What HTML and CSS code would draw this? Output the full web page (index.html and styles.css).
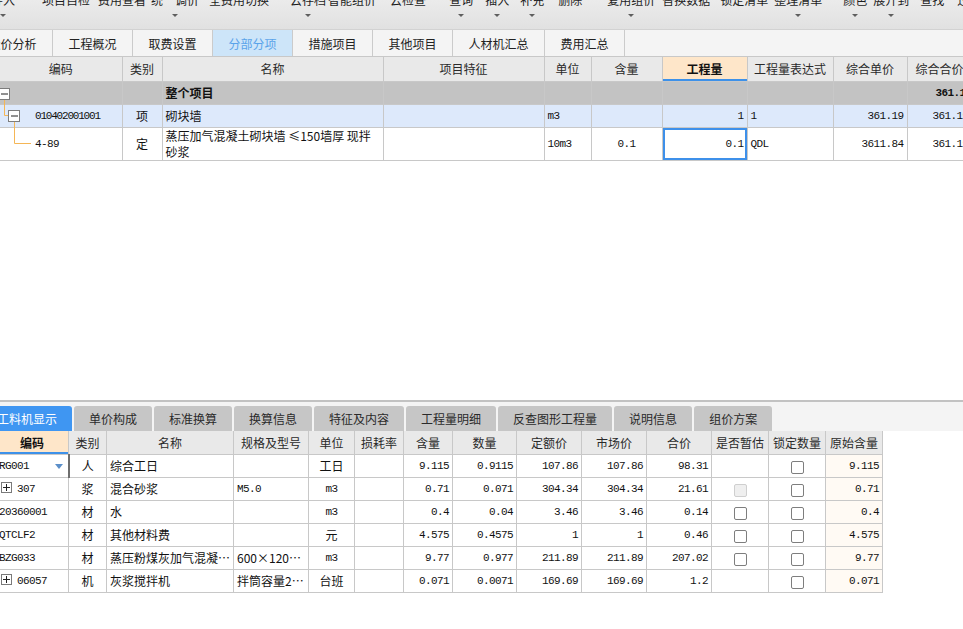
FILE: index.html
```html
<!DOCTYPE html>
<html lang="zh">
<head>
<meta charset="utf-8">
<title>分部分项</title>
<link rel="stylesheet" href="styles.css">
</head>
<body>
<div class="page">
  <div class="toolbar">
    <div class="tb-row">
      <div class="tb"><span class="lbl">导入</span><i class="arr"></i></div>
      <div class="tb"><span class="lbl">项目自检</span></div>
      <div class="tb"><span class="lbl">费用查看</span></div>
      <div class="tb"><span class="lbl">统一调价</span><i class="arr"></i></div>
      <div class="tb"><span class="lbl">全费用切换</span></div>
      <div class="tb"><span class="lbl">云存档</span><i class="arr"></i></div>
      <div class="tb"><span class="lbl">智能组价</span></div>
      <div class="tb"><span class="lbl">云检查</span></div>
      <div class="tb"><span class="lbl">查询</span><i class="arr"></i></div>
      <div class="tb"><span class="lbl">插入</span><i class="arr"></i></div>
      <div class="tb"><span class="lbl">补充</span><i class="arr"></i></div>
      <div class="tb"><span class="lbl">删除</span></div>
      <div class="tb"><span class="lbl">复用组价</span><i class="arr"></i></div>
      <div class="tb"><span class="lbl">替换数据</span></div>
      <div class="tb"><span class="lbl">锁定清单</span></div>
      <div class="tb"><span class="lbl">整理清单</span><i class="arr"></i></div>
      <div class="tb"><span class="lbl">颜色</span><i class="arr"></i></div>
      <div class="tb"><span class="lbl">展开到</span><i class="arr"></i></div>
      <div class="tb"><span class="lbl">查找</span></div>
      <div class="tb"><span class="lbl">过滤</span></div>
    </div>
  </div>

  <div class="tabs">
    <div class="tab first">造价分析</div>
    <div class="tab">工程概况</div>
    <div class="tab">取费设置</div>
    <div class="tab active">分部分项</div>
    <div class="tab">措施项目</div>
    <div class="tab">其他项目</div>
    <div class="tab wide">人材机汇总</div>
    <div class="tab">费用汇总</div>
  </div>

  <div class="upper">
    <table class="grid top">
      <colgroup>
        <col class="c122"><col class="c40"><col class="c221"><col class="c161"><col class="c47">
        <col class="c71"><col class="c85"><col class="c86"><col class="c74"><col class="c65">
      </colgroup>
      <thead>
        <tr>
          <th>编码</th><th>类别</th><th>名称</th><th>项目特征</th><th>单位</th>
          <th>含量</th><th class="hl">工程量</th><th>工程量表达式</th><th>综合单价</th><th>综合合价</th>
        </tr>
      </thead>
      <tbody>
        <tr class="r-all">
          <td></td><td></td><td class="bold">整个项目</td><td></td><td></td>
          <td></td><td></td><td></td><td></td><td class="num bold">361.19</td>
        </tr>
        <tr class="r-qd">
          <td class="code narrow">010402001001</td><td class="ctr">项</td><td>砌块墙</td><td></td><td class="mono">m3</td>
          <td></td><td class="num">1</td><td class="mono">1</td><td class="num">361.19</td><td class="num">361.19</td>
        </tr>
        <tr class="r-de">
          <td class="code">4-89</td><td class="ctr">定</td><td class="wrap">蒸压加气混凝土砌块墙 ≤150墙厚 现拌<br>砂浆</td><td></td><td class="mono">10m3</td>
          <td class="num ctr">0.1</td><td class="num focus">0.1</td><td class="mono">QDL</td><td class="num">3611.84</td><td class="num">361.19</td>
        </tr>
      </tbody>
    </table>
    <svg class="tree" width="40" height="103" viewBox="0 0 40 103">
      <g fill="none" stroke="#f5b656" stroke-width="1">
        <path d="M4.5 42 V58.5 H8"/>
        <path d="M14.5 65 V86.5 H31"/>
      </g>
      <g fill="#fff" stroke="#7d7d7d" stroke-width="1">
        <rect x="-1.5" y="31.5" width="11" height="11"/>
        <rect x="8.5" y="53.5" width="11" height="11"/>
      </g>
      <g stroke="#222" stroke-width="1">
        <path d="M1 37 H8"/>
        <path d="M11 59 H18"/>
      </g>
    </svg>
  </div>

  <div class="blank"></div>

  <div class="lower">
    <div class="btabs">
      <div class="btab active">工料机显示</div>
      <div class="btab">单价构成</div>
      <div class="btab">标准换算</div>
      <div class="btab">换算信息</div>
      <div class="btab">特征及内容</div>
      <div class="btab">工程量明细</div>
      <div class="btab">反查图形工程量</div>
      <div class="btab">说明信息</div>
      <div class="btab">组价方案</div>
    </div>
    <table class="grid bottom">
      <colgroup>
        <col class="c73"><col class="c38"><col class="c127"><col class="c75"><col class="c46"><col class="c49"><col class="c49">
        <col class="c64"><col class="c65"><col class="c65"><col class="c65"><col class="c57"><col class="c57"><col class="c57">
      </colgroup>
      <thead>
        <tr>
          <th class="hl">编码</th><th>类别</th><th>名称</th><th>规格及型号</th><th>单位</th><th>损耗率</th><th>含量</th>
          <th>数量</th><th>定额价</th><th>市场价</th><th>合价</th><th>是否暂估</th><th>锁定数量</th><th>原始含量</th>
        </tr>
      </thead>
      <tbody>
        <tr>
          <td class="code edit">RG001<i class="dd"></i></td><td class="ctr">人</td><td>综合工日</td><td></td><td class="ctr">工日</td><td></td><td class="num">9.115</td>
          <td class="num">0.9115</td><td class="num">107.86</td><td class="num">107.86</td><td class="num">98.31</td><td></td><td class="ctr"><i class="cb"></i></td><td class="num orig">9.115</td>
        </tr>
        <tr>
          <td class="code"><i class="pb"></i>307</td><td class="ctr">浆</td><td>混合砂浆</td><td class="mono">M5.0</td><td class="ctr mono">m3</td><td></td><td class="num">0.71</td>
          <td class="num">0.071</td><td class="num">304.34</td><td class="num">304.34</td><td class="num">21.61</td><td class="ctr"><i class="cb dis"></i></td><td class="ctr"><i class="cb"></i></td><td class="num orig">0.71</td>
        </tr>
        <tr>
          <td class="code">20360001</td><td class="ctr">材</td><td>水</td><td></td><td class="ctr mono">m3</td><td></td><td class="num">0.4</td>
          <td class="num">0.04</td><td class="num">3.46</td><td class="num">3.46</td><td class="num">0.14</td><td class="ctr"><i class="cb"></i></td><td class="ctr"><i class="cb"></i></td><td class="num orig">0.4</td>
        </tr>
        <tr>
          <td class="code">QTCLF2</td><td class="ctr">材</td><td>其他材料费</td><td></td><td class="ctr">元</td><td></td><td class="num">4.575</td>
          <td class="num">0.4575</td><td class="num">1</td><td class="num">1</td><td class="num">0.46</td><td class="ctr"><i class="cb"></i></td><td class="ctr"><i class="cb"></i></td><td class="num orig">4.575</td>
        </tr>
        <tr>
          <td class="code">BZG033</td><td class="ctr">材</td><td class="clip">蒸压粉煤灰加气混凝…</td><td class="clip">600×120…</td><td class="ctr mono">m3</td><td></td><td class="num">9.77</td>
          <td class="num">0.977</td><td class="num">211.89</td><td class="num">211.89</td><td class="num">207.02</td><td class="ctr"><i class="cb"></i></td><td class="ctr"><i class="cb"></i></td><td class="num orig">9.77</td>
        </tr>
        <tr>
          <td class="code"><i class="pb"></i>06057</td><td class="ctr">机</td><td>灰浆搅拌机</td><td class="clip">拌筒容量2…</td><td class="ctr">台班</td><td></td><td class="num">0.071</td>
          <td class="num">0.0071</td><td class="num">169.69</td><td class="num">169.69</td><td class="num">1.2</td><td></td><td class="ctr"><i class="cb"></i></td><td class="num orig">0.071</td>
        </tr>
      </tbody>
    </table>
  </div>
</div>
</body>
</html>
```

FILE: styles.css
```css
html, body {
  margin: 0;
  padding: 0;
  background: #fff;
  overflow: hidden;
}
body {
  width: 963px;
  height: 629px;
  font-family: "Noto Sans CJK SC", "Microsoft YaHei", sans-serif;
  font-size: 12px;
  color: #222;
}
.page {
  display: flex;
  flex-direction: column;
  width: 963px;
  height: 629px;
  overflow: hidden;
}

/* ---------- toolbar ---------- */
.toolbar {
  flex: none;
  height: 29px;
  background: linear-gradient(#ebebeb, #e1e1e1);
  border-bottom: 1px solid #d2d2d2;
  overflow: hidden;
}
.tb-row {
  display: flex;
  align-items: flex-start;
  margin-top: -6px;
  margin-left: -9px;
}
.tb {
  display: flex;
  flex-direction: column;
  align-items: center;
  flex: none;
  line-height: 12px;
  color: #1e1e1e;
  white-space: nowrap;
}
.tb .arr {
  width: 0;
  height: 0;
  border-left: 3px solid transparent;
  border-right: 3px solid transparent;
  border-top: 3px solid #5e5e5e;
  margin-top: 8px;
}
.tb:nth-child(2)  { margin-left: 27px; }
.tb:nth-child(3)  { margin-left: 8px; }
.tb:nth-child(4)  { margin-left: 5px; }
.tb:nth-child(5)  { margin-left: 10px; }
.tb:nth-child(6)  { margin-left: 21px; }
.tb:nth-child(7)  { margin-left: 2px; }
.tb:nth-child(8)  { margin-left: 14px; }
.tb:nth-child(9)  { margin-left: 23px; }
.tb:nth-child(10) { margin-left: 12px; }
.tb:nth-child(11) { margin-left: 11px; }
.tb:nth-child(12) { margin-left: 14px; }
.tb:nth-child(13) { margin-left: 25px; }
.tb:nth-child(14) { margin-left: 7px; }
.tb:nth-child(15) { margin-left: 10px; }
.tb:nth-child(16) { margin-left: 6px; }
.tb:nth-child(17) { margin-left: 21px; }
.tb:nth-child(18) { margin-left: 6px; }
.tb:nth-child(19) { margin-left: 11px; }
.tb:nth-child(20) { margin-left: 13px; }

/* ---------- top tabs ---------- */
.tabs {
  flex: none;
  display: flex;
  height: 26px;
  background: #f4f4f4;
  border-bottom: 1px solid #c8c8c8;
}
.tab {
  flex: none;
  width: 79px;
  border-right: 1px solid #cbcbcb;
  display: flex;
  align-items: center;
  justify-content: center;
  color: #222;
  white-space: nowrap;
}
.tab.first { margin-left: -27px; }
.tab.wide { width: 91px; }
.tab.active {
  background: #cde5f9;
  color: #5aa3ea;
}

/* ---------- grids ---------- */
.grid {
  border-collapse: collapse;
  table-layout: fixed;
}
.grid th, .grid td {
  border: 1px solid #c8c8c8;
  padding: 0 3px;
  overflow: hidden;
  white-space: nowrap;
  vertical-align: middle;
}
.grid th {
  background: #e9e9e9;
  font-weight: normal;
  color: #2a2a2a;
  text-align: center;
  border-top: none;
}
.grid th.hl {
  background: #fee6c9;
  font-weight: bold;
  color: #111;
  box-shadow: inset 0 -2px 0 #3d91e9;
}
.grid td { color: #111; }
.num {
  text-align: right;
  font-family: "Liberation Mono", monospace;
  font-size: 11px;
  letter-spacing: -0.6px;
}
.mono, .code {
  font-family: "Liberation Mono", "Noto Sans CJK SC", monospace;
  font-size: 11px;
  letter-spacing: -0.6px;
}
.ctr { text-align: center; }
.num.ctr { text-align: center; }
.bold { font-weight: bold; }

/* upper grid */
.upper {
  flex: none;
  position: relative;
}
.top { width: 972px; }
.top th:first-child, .top td:first-child { border-left: none; }
.top thead tr { height: 24px; }
.top tbody tr { height: 23px; }
.top tbody tr.r-de { height: 33px; }
.top .code { padding-left: 35px; }
.top .code.narrow { letter-spacing: -1.2px; }
.r-all td { background: #c3c3c3; }
.r-all td.num.bold { font-weight: bold; padding-right: 0; }
.r-qd td { background: #dde9fb; }
.r-de td { background: #fff; }
.top td.wrap {
  white-space: normal;
  line-height: 16px;
  vertical-align: middle;
}
.top td.focus { box-shadow: inset 0 0 0 2px #3e90ea; }
.tree {
  position: absolute;
  left: 0;
  top: 0;
  overflow: visible;
}

.c122 { width: 122px; } .c40 { width: 40px; } .c221 { width: 221px; } .c161 { width: 161px; }
.c47 { width: 47px; } .c71 { width: 71px; } .c85 { width: 85px; } .c86 { width: 86px; }
.c74 { width: 74px; } .c65 { width: 65px; }
.c73 { width: 73px; } .c38 { width: 38px; } .c127 { width: 127px; } .c75 { width: 75px; }
.c46 { width: 46px; } .c49 { width: 49px; } .c64 { width: 64px; } .c57 { width: 57px; }

.blank { flex: 1; background: #fff; }

/* ---------- lower panel ---------- */
.lower {
  flex: none;
  height: 227px;
  border-top: 2px solid #c2c2c2;
  background: #fff;
}
.btabs {
  display: flex;
  gap: 2px;
  height: 29px;
  align-items: flex-end;
  background: #f4f4f4;
  margin-left: -18px;
}
.btab {
  flex: none;
  height: 25px;
  padding: 0 15px;
  display: flex;
  align-items: center;
  background: #c6c6c6;
  color: #2a2a2a;
  border-radius: 3px 3px 0 0;
  white-space: nowrap;
}
.btab.active {
  background: #3f96f2;
  color: #fff;
}
.bottom {
  width: 887px;
  margin-left: -5px;
}
.bottom thead tr { height: 23px; }
.bottom tbody tr { height: 23px; }
.bottom td.code { padding-left: 3px; position: relative; }
.bottom td.edit { border-right: 2px solid #6e6e6e; }
.bottom td.clip { text-overflow: clip; }
.bottom td.orig { background: #fffaf4; }
.dd {
  position: absolute;
  right: 5px;
  top: 9px;
  width: 0;
  height: 0;
  border-left: 4px solid transparent;
  border-right: 4px solid transparent;
  border-top: 5px solid #5b8fc9;
}
.pb {
  display: inline-block;
  vertical-align: -1px;
  width: 9px;
  height: 9px;
  border: 1px solid #7a7a7a;
  margin: 0 5px 0 2px;
  background:
    linear-gradient(#222, #222) center / 7px 1px no-repeat,
    linear-gradient(#222, #222) center / 1px 7px no-repeat,
    #fff;
}
.cb {
  display: inline-block;
  vertical-align: middle;
  width: 11px;
  height: 11px;
  border: 1px solid #7e7e7e;
  border-radius: 2px;
  background: #fff;
}
.cb.dis {
  border-color: #cfcfcf;
  background: #efefef;
}
```
